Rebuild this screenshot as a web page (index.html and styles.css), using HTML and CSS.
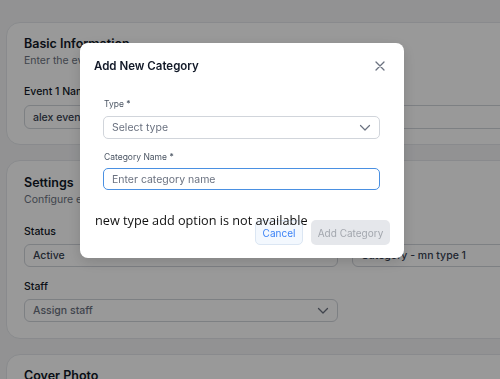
FILE: index.html
```html
<!DOCTYPE html>
<html lang="en">
<head>
    <meta charset="UTF-8">
    <meta name="viewport" content="width=device-width, initial-scale=1.0">
    <title>Add New Category</title>
    <link rel="stylesheet" href="styles.css">
</head>
<body>
    <div class="page">
        <section class="card card-basic">
            <h2>Basic Information</h2>
            <p class="hint">Enter the event details</p>
            <label class="field-label">Event 1 Name</label>
            <div class="field">alex event</div>
        </section>

        <section class="card card-settings">
            <h2>Settings</h2>
            <p class="hint">Configure event settings</p>
            <div class="row">
                <div>
                    <label class="field-label">Status</label>
                    <div class="field">Active</div>
                </div>
                <div>
                    <label class="field-label">Category</label>
                    <div class="field">Category - mn type 1</div>
                </div>
            </div>
            <label class="field-label staff-label">Staff</label>
            <div class="field field-select half">
                <span>Assign staff</span>
                <svg class="chev" width="12" height="8" viewBox="0 0 12 8"><path d="M1.5 1.5 6 6l4.5-4.5" fill="none" stroke="currentColor" stroke-width="1.3" stroke-linecap="round" stroke-linejoin="round"/></svg>
            </div>
        </section>

        <section class="card card-cover">
            <h2>Cover Photo</h2>
        </section>
    </div>

    <div class="overlay">
        <div class="modal">
            <div class="modal-head">
                <h3>Add New Category</h3>
                <svg class="close" width="10" height="10" viewBox="0 0 10 10"><path d="M1 1l8 8M9 1 1 9" stroke="currentColor" stroke-width="1.3" stroke-linecap="round"/></svg>
            </div>
            <div class="modal-body">
                <label class="m-label">Type *</label>
                <div class="m-input m-select">
                    <span>Select type</span>
                    <svg class="chev" width="12" height="8" viewBox="0 0 12 8"><path d="M1.5 1.5 6 6l4.5-4.5" fill="none" stroke="currentColor" stroke-width="1.2" stroke-linecap="round" stroke-linejoin="round"/></svg>
                </div>
                <label class="m-label second">Category Name *</label>
                <div class="m-input m-focus">
                    <span>Enter category name</span>
                </div>
            </div>
            <div class="modal-foot">
                <button class="btn btn-cancel">Cancel</button>
                <button class="btn btn-add">Add Category</button>
            </div>
            <p class="note">new type add option is not available</p>
        </div>
    </div>
</body>
</html>
```

FILE: styles.css
```css
body{
    margin: 0;
    background-color: #f3f4f6;
    font-family: Inter, "Noto Sans", sans-serif;
    color: #111827;
    overflow: hidden;
    height: 379px;
}
.page{
    width: 700px;
    padding: 22px 0 0 6px;
    display: flex;
    flex-direction: column;
    gap: 15px;
}
.card{
    background: #fff;
    border: 1px solid #e5e7eb;
    border-radius: 14px;
    padding: 13px 17px 15px;
}
.card-settings{
    padding: 14px 17px 16px;
}
.card-cover{
    padding: 13px 17px 10px;
}
h2{
    margin: 0;
    font-size: 12.5px;
    line-height: 16px;
    font-weight: 600;
}
.hint{
    margin: 2px 0 0;
    font-size: 10.5px;
    line-height: 14px;
    color: #6b7280;
}
.field-label{
    display: block;
    margin: 17px 0 6px;
    font-size: 10.5px;
    line-height: 14px;
    font-weight: 500;
    color: #111827;
}
.card-settings .field-label{
    margin-top: 18px;
    margin-bottom: 5px;
}
.card-settings .staff-label{
    margin: 13px 0 5px;
}
.field{
    height: 22px;
    border: 1px solid #d1d5db;
    border-radius: 6px;
    padding: 0 8px;
    display: flex;
    align-items: center;
    font-size: 10.5px;
    font-weight: 500;
    color: #374151;
}
.card-settings .field{
    height: 21px;
}
.row{
    display: grid;
    grid-template-columns: 314px 314px;
    gap: 14px;
}
.field-select{
    justify-content: space-between;
    color: #6b7280;
}
.half{
    width: 296px;
}
.chev{
    color: #6b7280;
}

.overlay{
    position: fixed;
    inset: 0;
    background: rgba(0, 0, 0, 0.4);
    display: flex;
    align-items: flex-start;
    padding: 43px 0 0 80px;
}
.modal{
    position: relative;
    width: 324px;
    height: 215px;
    box-sizing: border-box;
    background: #fff;
    border-radius: 8px;
    box-shadow: 0 4px 14px rgba(0, 0, 0, 0.15);
}
.modal-head{
    display: flex;
    justify-content: space-between;
    align-items: center;
    padding: 15px 19px 0 14px;
}
h3{
    margin: 0;
    font-size: 11.5px;
    line-height: 16px;
    font-weight: 600;
    color: #111827;
}
.close{
    color: #6b7280;
}
.modal-body{
    padding: 24px 24px 0 23px;
}
.m-label{
    display: block;
    font-size: 8.5px;
    line-height: 12px;
    color: #4b5563;
    margin: 0 0 6px 1px;
}
.m-label.second{
    margin-top: 12px;
    margin-bottom: 5px;
}
.m-input{
    height: 21px;
    border: 1px solid #d1d5db;
    border-radius: 5px;
    padding: 0 8px 0 8px;
    display: flex;
    align-items: center;
    justify-content: space-between;
    font-size: 10.5px;
    color: #6b7280;
}
.m-focus{
    border: 1.5px solid #4a90e2;
    height: 20px;
}
.modal-foot{
    display: flex;
    justify-content: flex-end;
    gap: 8px;
    padding: 30px 14px 0 0;
}
.btn{
    height: 25px;
    border-radius: 5px;
    font-family: Inter, "Noto Sans", sans-serif;
    font-size: 10px;
    padding: 0 9px;
}
.btn-cancel{
    background: #f3f8fe;
    border: 1px solid #dbe6f3;
    color: #3b82f6;
    width: 48px;
    padding: 0;
}
.btn-add{
    background: #e5e7eb;
    border: none;
    color: #a3a7ae;
    width: 79px;
    padding: 0;
}
.note{
    position: absolute;
    left: 15px;
    top: 168px;
    margin: 0;
    font-family: "Open Sans", sans-serif;
    font-size: 12.7px;
    line-height: 18px;
    color: #111;
}
```
